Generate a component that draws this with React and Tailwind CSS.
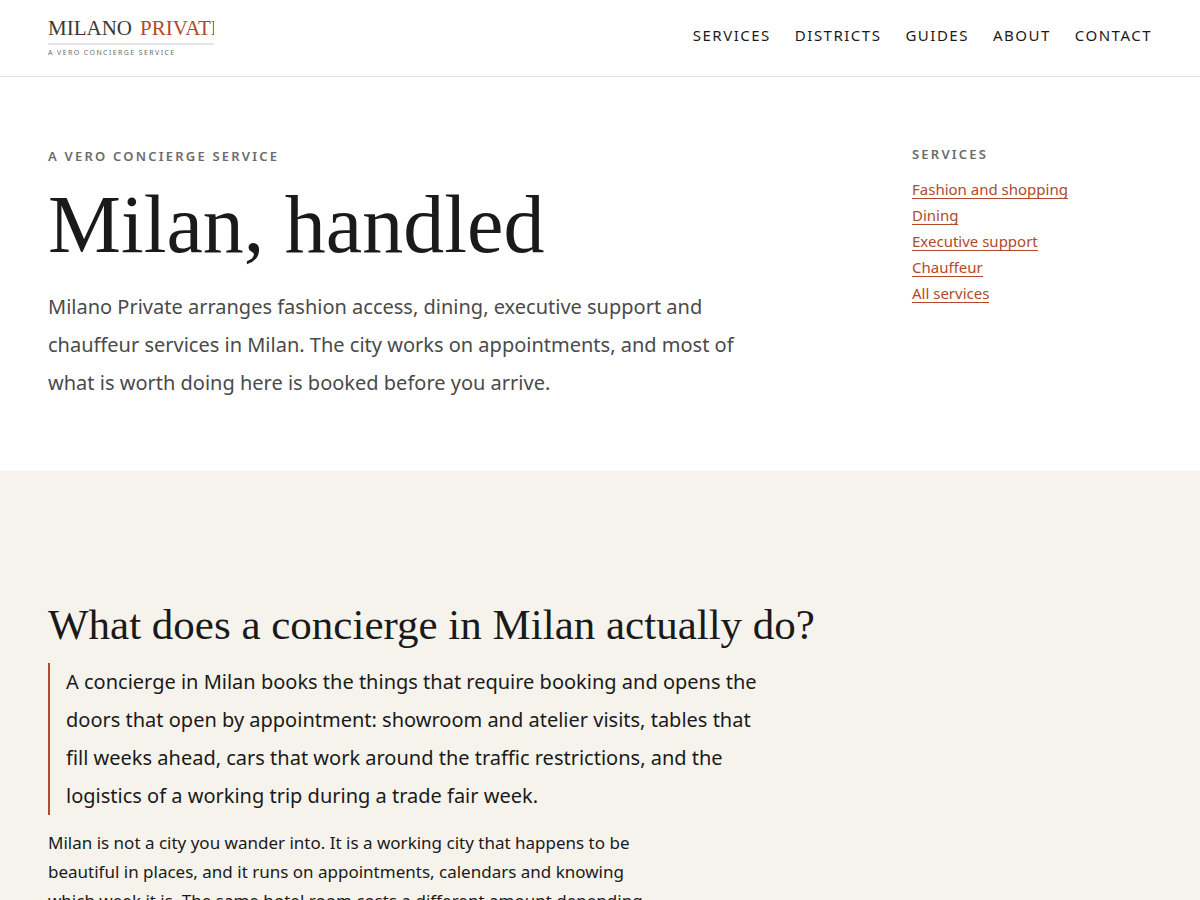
const navigation = ["Services", "Districts", "Guides", "About", "Contact"];

const services = [
  "Fashion and shopping",
  "Dining",
  "Executive support",
  "Chauffeur",
  "All services",
];

const slug = (label) => "#" + label.toLowerCase().replaceAll(" ", "-");

function Logo() {
  return (
    <a href="#home" className="block w-[166px] overflow-hidden whitespace-nowrap">
      <span className="flex gap-2 border-b-2 border-[#e5e5e3] font-['Liberation_Serif',serif] text-[21px] leading-[29px] text-[#3a3935]">
        <span>MILANO</span>
        <span className="text-[#b04a2a]">PRIVATE</span>
      </span>
      <span className="block text-[7px] leading-4 tracking-[0.2em] text-[#6b6b6b]">
        A VERO CONCIERGE SERVICE
      </span>
    </a>
  );
}

function Header() {
  return (
    <header className="flex items-start justify-between border-b border-[#e2e2e2] px-12 pt-[14px] pb-[15px]">
      <Logo />
      <nav aria-label="Main" className="flex gap-6 pt-[9px] text-[15px] leading-6 tracking-[0.1em] uppercase">
        {navigation.map((label) => (
          <a key={label} href={slug(label)}>
            {label}
          </a>
        ))}
      </nav>
    </header>
  );
}

function Hero() {
  return (
    <section className="grid grid-cols-[1fr_240px] gap-16 px-12 pt-[67px] pb-[69px]">
      <div>
        <p className="text-[13px] leading-6 font-semibold tracking-[0.17em] text-[#6b6b6b] uppercase">
          A Vero Concierge Service
        </p>
        <h1 className="pt-[9px] font-['Liberation_Serif',serif] text-[82px] leading-[96px]">
          Milan, handled
        </h1>
        <p className="max-w-[720px] pt-[15px] text-[20px] leading-[38px] text-[#4a4a4a]">
          Milano Private arranges fashion access, dining, executive support and
          chauffeur services in Milan. The city works on appointments, and most
          of what is worth doing here is booked before you arrive.
        </p>
      </div>
      <aside>
        <h2 className="text-[13px] leading-5 font-semibold tracking-[0.17em] text-[#6b6b6b] uppercase">
          Services
        </h2>
        <ul className="flex flex-col gap-1.5 pt-4 text-[15px] leading-5 text-[#b04a2a]">
          {services.map((label) => (
            <li key={label} className="flex items-center h-5">
              <a href={slug(label)} className="border-b border-[#b04a2a] leading-[17px]">
                {label}
              </a>
            </li>
          ))}
        </ul>
      </aside>
    </section>
  );
}

function Introduction() {
  return (
    <section className="bg-[#f6f3ec] px-12 pt-32 pb-32">
      <h2 className="font-['Liberation_Serif',serif] text-[43px] leading-[52px]">
        What does a concierge in Milan actually do?
      </h2>
      <p className="mt-3 max-w-[724px] border-l-2 border-[#b04a2a] pl-4 text-[20px] leading-[38px]">
        A concierge in Milan books the things that require booking and opens the
        doors that open by appointment: showroom and atelier visits, tables that
        fill weeks ahead, cars that work around the traffic restrictions, and
        the logistics of a working trip during a trade fair week.
      </p>
      <p className="mt-[13px] max-w-[620px] text-[17px] leading-[29px]">
        Milan is not a city you wander into. It is a working city that happens
        to be beautiful in places, and it runs on appointments, calendars and
        knowing which week it is. The same hotel room costs a different amount
        depending
      </p>
    </section>
  );
}

export default function App() {
  return (
    <div className="min-h-screen bg-white font-['Noto_Sans',sans-serif] text-[#1a1a1a]">
      <Header />
      <main>
        <Hero />
        <Introduction />
      </main>
    </div>
  );
}
